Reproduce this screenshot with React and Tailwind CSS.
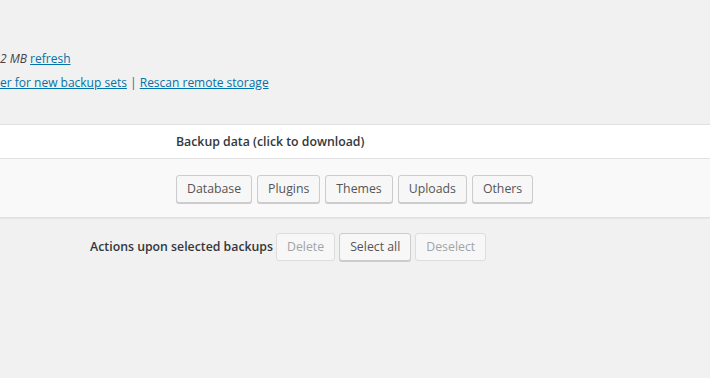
export default function App() {
  const btn =
    "h-[28px] px-[10px] rounded-[3px] border border-[#cccccc] bg-[#f7f7f7] text-[#555555] text-[12.3px] leading-[26px] shadow-[0_1px_0_#cccccc]";
  const btnDis =
    "h-[28px] px-[10px] rounded-[3px] border border-[#dddddd] bg-[#f7f7f7] text-[#a0a5aa] text-[12.3px] leading-[26px]";
  return (
    <div
      className="w-[710px] h-[378px] bg-[#f1f1f1] overflow-hidden text-[12.3px] text-[#444444]"
      style={{ fontFamily: "'Open Sans', 'Noto Sans', sans-serif" }}
    >
      <div className="pt-[47px] pl-0 text-[12px]">
        <div className="h-[24px] leading-[24px] whitespace-nowrap">
          <em>2 MB</em>{" "}
          <a className="text-[#0073aa] underline">refresh</a>
        </div>
        <div className="h-[24px] leading-[24px] whitespace-nowrap">
          <a className="text-[#0073aa] underline">er for new backup sets</a>
          <span className="text-[#0073aa]"> | </span>
          <a className="text-[#0073aa] underline">Rescan remote storage</a>
        </div>
      </div>
      <div className="mt-[29px] border-t border-b border-[#e1e1e1] bg-white shadow-[0_1px_1px_rgba(0,0,0,0.04)]">
        <div className="h-[34px] flex items-center pl-[176px] pt-[1px] font-semibold text-[#32373c] border-b border-[#e1e1e1]">
          Backup data (click to download)
        </div>
        <div className="h-[58px] bg-[#f9f9f9] flex items-start pt-[16px] gap-[5px] pl-[176px]">
          <button className={btn}>Database</button>
          <button className={btn}>Plugins</button>
          <button className={btn}>Themes</button>
          <button className={btn}>Uploads</button>
          <button className={btn}>Others</button>
        </div>
      </div>
      <div className="mt-[15px] flex items-center">
        <div className="w-[273px] text-right font-semibold text-[#32373c] pr-0">
          Actions upon selected backups
        </div>
        <div className="ml-[3px] flex gap-[4px]">
          <button className={btnDis}>Delete</button>
          <button className={btn}>Select all</button>
          <button className={btnDis}>Deselect</button>
        </div>
      </div>
    </div>
  );
}
